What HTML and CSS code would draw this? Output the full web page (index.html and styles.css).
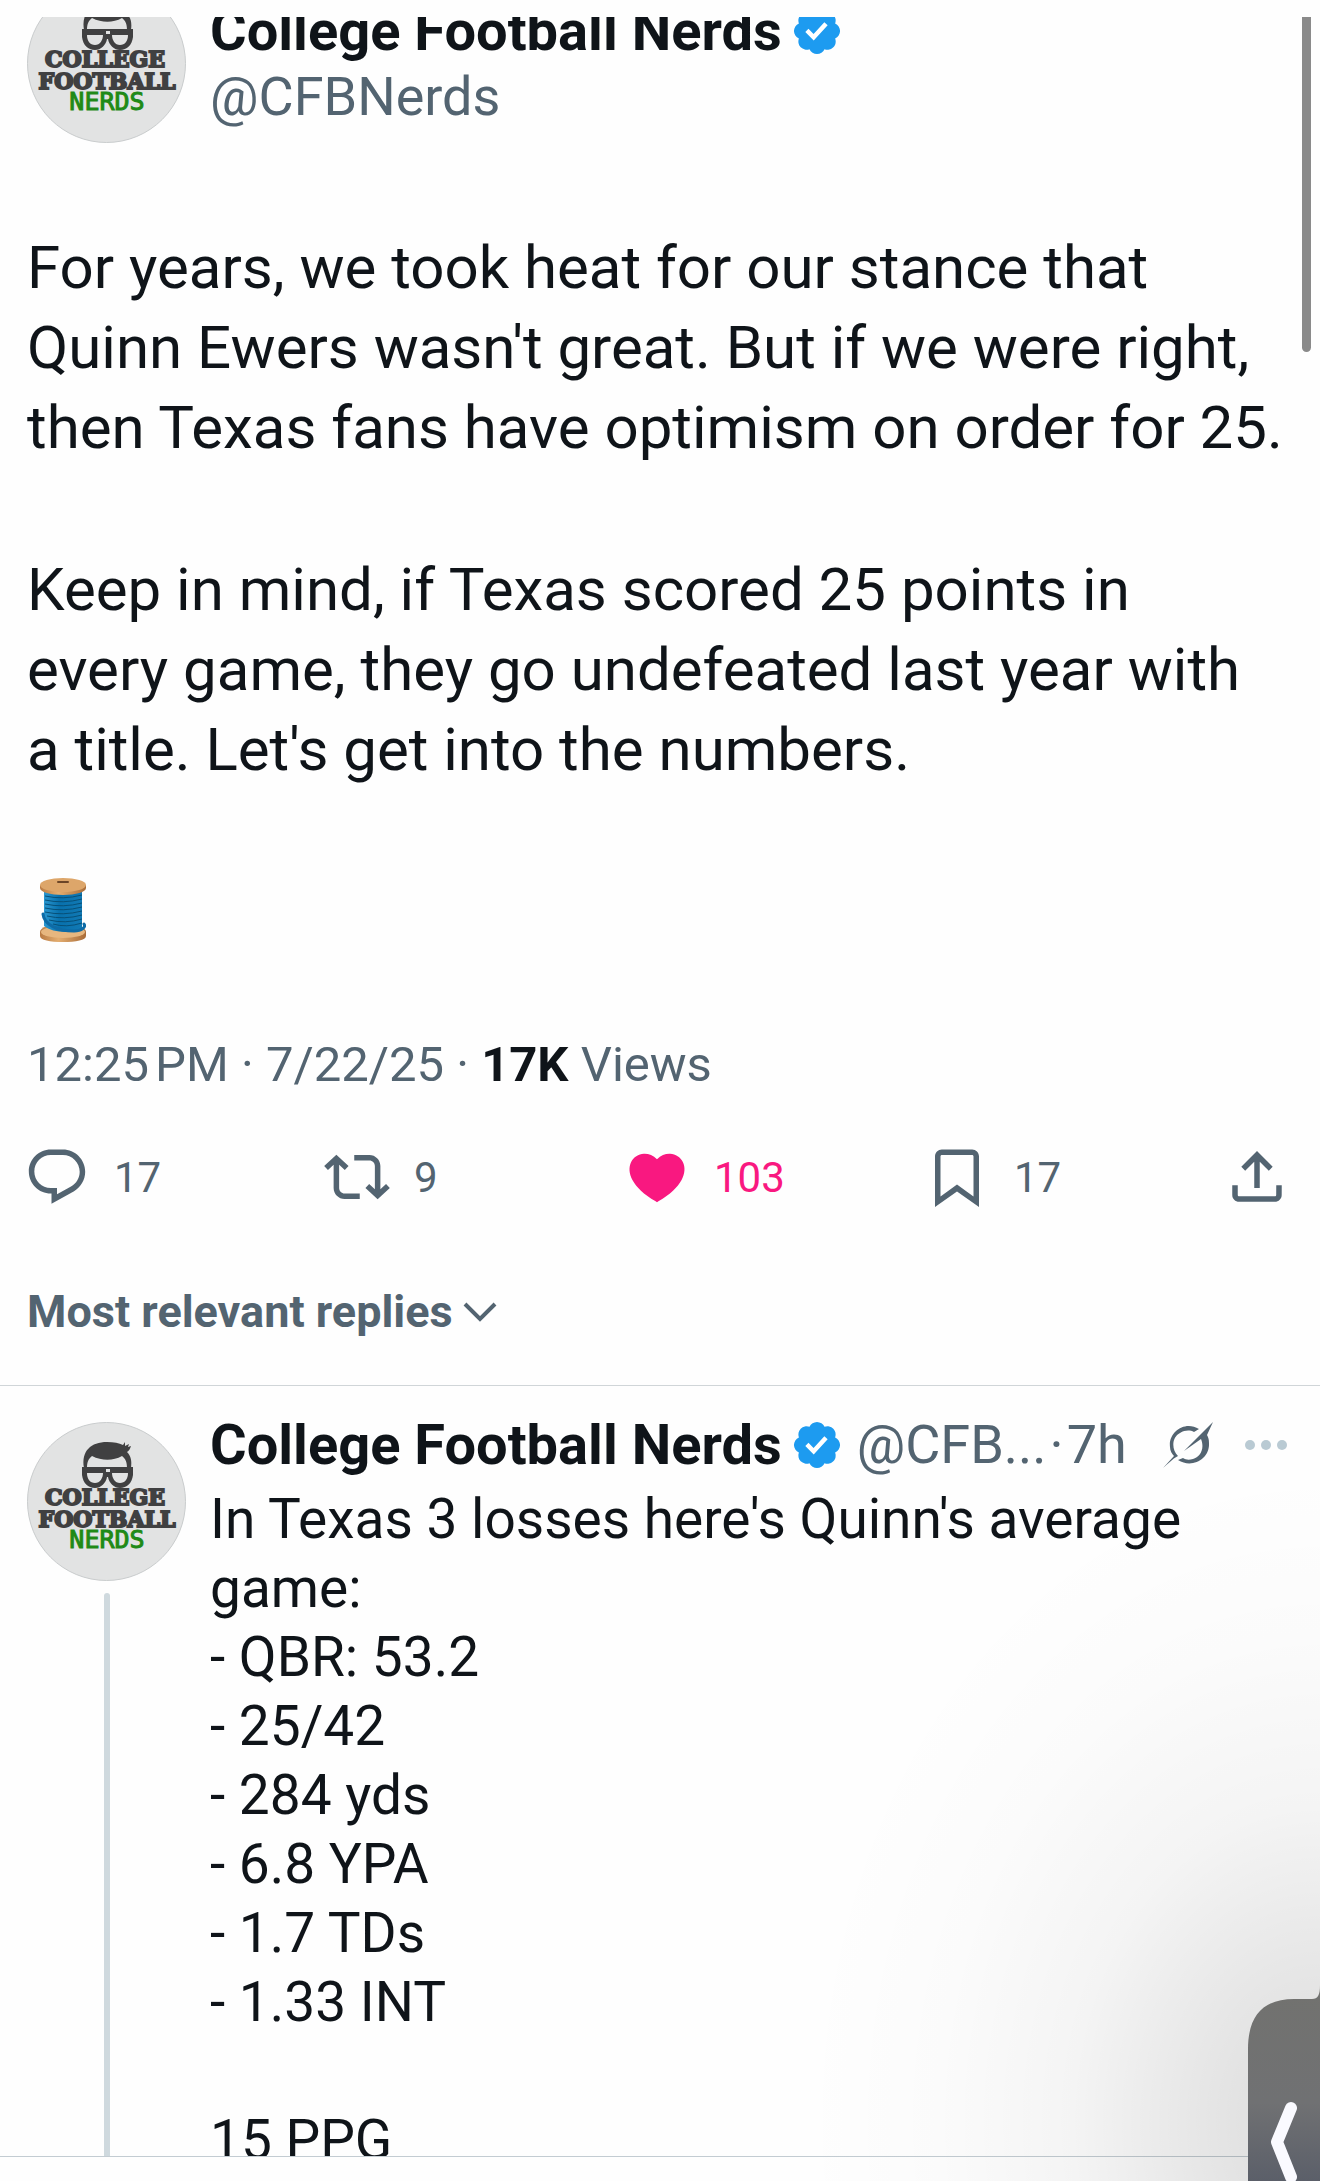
FILE: index.html
```html
<!DOCTYPE html>
<html lang="en">
<head>
    <meta charset="UTF-8">
    <meta name="viewport" content="width=device-width, initial-scale=1.0">
    <title>College Football Nerds - Post</title>
    <link rel="stylesheet" href="styles.css">
</head>
<body>
    <!-- Shared artwork -->
    <svg class="sprite" aria-hidden="true">
        <symbol id="logo" viewBox="0 0 159 159">
            <circle cx="79.5" cy="79.5" r="79" fill="#e2e3e3" stroke="#c9cccd"/>
            <path fill="#404041" d="M57 46C54 29 64 20 80 20c7 0 12 1 16 3l2-3v4l4-2-1 3 3-1c-1 3-2 5-4 6 4 4 5 9 4 16h-4c0-5-1-9-5-12-9 5-20 5-30 0-4 3-5 7-5 12z"/>
            <path fill="#404041" fill-rule="evenodd" d="M55 45h51v8c-1 8-6 13-13 13-6 0-11-5-12-11h-1c-1 6-6 11-12 11-7 0-12-5-13-13zm5 6c0 6 3 10 8 10s8-5 8-10zm25 0c0 5 3 10 8 10s8-4 8-10zm-6-4v3h4v-3z"/>
            <g class="logo-slab">
                <text x="78" y="83">COLLEGE</text>
                <text x="80" y="105">FOOTBALL</text>
            </g>
            <text class="logo-digital" x="80" y="126">NERDS</text>
        </symbol>
        <symbol id="verified" viewBox="0 0 22 22">
            <path fill="#1d9bf0" d="M20.396 11c-.018-.646-.215-1.275-.57-1.816-.354-.54-.852-.972-1.438-1.246.223-.607.27-1.264.14-1.897-.131-.634-.437-1.218-.882-1.687-.47-.445-1.053-.75-1.687-.882-.633-.13-1.29-.083-1.897.14-.273-.587-.704-1.086-1.245-1.44S11.647 1.62 11 1.604c-.646.017-1.273.213-1.813.568s-.969.854-1.24 1.44c-.608-.223-1.267-.272-1.902-.14-.635.13-1.22.436-1.69.882-.445.47-.749 1.055-.878 1.688-.13.633-.08 1.29.144 1.896-.587.274-1.087.705-1.443 1.245-.356.54-.555 1.17-.574 1.817.02.647.218 1.276.574 1.817.356.54.856.972 1.443 1.245-.224.606-.274 1.263-.144 1.896.13.634.433 1.218.877 1.688.47.443 1.054.747 1.687.878.633.132 1.29.084 1.897-.136.274.586.705 1.084 1.246 1.439.54.354 1.17.551 1.816.569.647-.016 1.276-.213 1.817-.567s.972-.854 1.245-1.44c.604.239 1.266.296 1.903.164.636-.132 1.22-.447 1.68-.907.46-.46.776-1.044.908-1.681s.075-1.299-.165-1.903c.586-.274 1.084-.705 1.439-1.246.354-.54.551-1.17.569-1.816z"/>
            <path fill="#fff" d="M9.662 14.85l-3.429-3.428 1.293-1.302 2.072 2.072 4.4-4.794 1.347 1.246z"/>
        </symbol>
    </svg>

    <main class="screen">
        <article class="post">
            <header class="post-header">
                <a href="#profile" class="avatar" aria-label="College Football Nerds"><svg><use href="#logo"/></svg></a>
                <div class="author">
                    <a href="#profile" class="name">College Football Nerds <svg class="badge"><use href="#verified"/></svg></a>
                    <a href="#profile" class="handle">@CFBNerds</a>
                </div>
            </header>

            <div class="post-text">
                <p>For years, we took heat for our stance that Quinn Ewers wasn't great. But if we were right, then Texas fans have optimism on order for 25.</p>
                <p>Keep in mind, if Texas scored 25 points in<br> every game, they go undefeated last year with<br> a title. Let's get into the numbers.</p>
            </div>

            <svg class="thread-emoji" viewBox="0 0 46 64" role="img" aria-label="thread">
                <defs>
                    <linearGradient id="wood" x2="1">
                        <stop offset="0" stop-color="#b97b43"/>
                        <stop offset=".4" stop-color="#e3ad70"/>
                        <stop offset="1" stop-color="#a96c38"/>
                    </linearGradient>
                    <linearGradient id="yarn" x2="1">
                        <stop offset="0" stop-color="#2a97d0"/>
                        <stop offset=".4" stop-color="#0871ad"/>
                        <stop offset="1" stop-color="#1179b4"/>
                    </linearGradient>
                </defs>
                <path fill="url(#wood)" d="M0 54c0-5 10-8 23-8s23 3 23 8v4c0 4-10 6-23 6S0 62 0 58z"/>
                <ellipse cx="23" cy="54" rx="22" ry="6" fill="#e7b77f"/>
                <path fill="url(#yarn)" d="M4 11h38v39c-8 6-30 5-38-2z"/>
                <path fill="none" stroke="#075078" d="M5 18q18 4 37-1M5 22q18 4 37-1M5 26q18 4 37-1M5 30q18 4 37-1M5 34q18 4 37-1M7 38q17 4 35-1M9 42q16 4 33-1M13 46q13 4 29-1"/>
                <path fill="none" stroke="#0e6ba6" stroke-width="3" stroke-linecap="round" d="M3 36c1 11 15 17 31 17 8 0 12-4 10-7"/>
                <path fill="url(#wood)" d="M0 7h46v3c0 4-10 7-23 7S0 14 0 10z"/>
                <ellipse cx="23" cy="7" rx="23" ry="7" fill="#dda66a"/>
                <rect x="17" y="3" width="12" height="2" rx="1" fill="#6b4527"/>
            </svg>

            <p class="meta">12:25&#8239;PM · 7/22/25 · <strong>17K</strong> Views</p>

            <div class="actions">
                <button type="button" class="action" aria-label="17 replies">
                    <svg viewBox="0 0 24 24"><path d="M1.751 10c0-4.42 3.584-8 8.005-8h4.366c4.49 0 8.129 3.64 8.129 8.13 0 2.96-1.607 5.68-4.196 7.11l-8.054 4.46v-3.69h-.067c-4.49.1-8.183-3.51-8.183-8.01zm8.005-6c-3.317 0-6.005 2.69-6.005 6 0 3.37 2.77 6.08 6.138 6.01l.351-.01h1.761v2.3l5.087-2.81c1.951-1.08 3.163-3.13 3.163-5.36 0-3.39-2.744-6.13-6.129-6.13H9.756z"/></svg>
                    17
                </button>
                <button type="button" class="action" aria-label="9 reposts">
                    <svg viewBox="0 0 24 24"><path d="M4.5 3.88l4.432 4.14-1.364 1.46L5.5 7.55V16c0 1.1.896 2 2 2H13v2H7.5c-2.209 0-4-1.79-4-4V7.55L1.432 9.48.068 8.02 4.5 3.88zM16.5 6H11V4h5.5c2.209 0 4 1.79 4 4v8.45l2.068-1.93 1.364 1.46-4.432 4.14-4.432-4.14 1.364-1.46 2.068 1.93V8c0-1.1-.896-2-2-2z"/></svg>
                    9
                </button>
                <button type="button" class="action liked" aria-label="103 likes">
                    <svg viewBox="0 0 24 24"><path d="M20.884 13.19c-1.351 2.48-4.001 5.12-8.379 7.67l-.503.3-.504-.3c-4.379-2.55-7.029-5.19-8.382-7.67-1.36-2.5-1.41-4.86-.514-6.67.887-1.79 2.647-2.91 4.601-3.01 1.651-.09 3.368.56 4.798 2.01 1.429-1.45 3.146-2.1 4.796-2.01 1.954.1 3.714 1.22 4.601 3.01.896 1.81.846 4.17-.514 6.67z"/></svg>
                    103
                </button>
                <button type="button" class="action" aria-label="17 bookmarks">
                    <svg viewBox="0 0 24 24"><path d="M4 4.5C4 3.12 5.119 2 6.5 2h11C18.881 2 20 3.12 20 4.5v18.44l-8-5.71-8 5.71V4.5zM6.5 4c-.276 0-.5.22-.5.5v14.56l6-4.29 6 4.29V4.5c0-.28-.224-.5-.5-.5h-11z"/></svg>
                    17
                </button>
                <button type="button" class="action" aria-label="Share">
                    <svg viewBox="0 0 24 24"><path d="M12 2.59l5.7 5.7-1.41 1.42L13 6.41V16h-2V6.41l-3.3 3.3-1.41-1.42L12 2.59zM21 15l-.02 3.51c0 1.38-1.12 2.49-2.5 2.49H5.5C4.11 21 3 19.88 3 18.5V15h2v3.5c0 .28.22.5.5.5h12.98c.28 0 .5-.22.5-.5L19 15h2z"/></svg>
                </button>
            </div>

            <button type="button" class="sort">
                Most relevant replies
                <svg viewBox="0 0 34 20"><path d="M2 2l15 15L32 2"/></svg>
            </button>
        </article>

        <article class="reply">
            <div class="rail">
                <a href="#profile" class="avatar" aria-label="College Football Nerds"><svg><use href="#logo"/></svg></a>
                <div class="thread-line"></div>
            </div>
            <div class="reply-body">
                <header class="reply-header">
                    <a href="#profile" class="name">College Football Nerds <svg class="badge"><use href="#verified"/></svg></a>
                    <span class="handle byline"><span>@CFB...</span><span>·</span><span>7h</span></span>
                    <button type="button" class="icon-button grok" aria-label="Explain this post">
                        <svg viewBox="0 0 50 46">
                            <path d="M36 7C22-2 5 10 7 25c0 4 2 7 4 9L0 46c5-4 9-9 15-12C8 27 9 15 17 11c5-3 10-3 14-1z"/>
                            <path d="M15 38c14 9 32-1 31-17 0-4-1-6-2-8L50 0 21 29l17-12c4 10-1 18-8 20-4 1-7 1-10-1z"/>
                        </svg>
                    </button>
                    <button type="button" class="icon-button more" aria-label="More">
                        <svg viewBox="0 0 42 10"><circle cx="5" cy="5" r="5"/><circle cx="21" cy="5" r="5"/><circle cx="37" cy="5" r="5"/></svg>
                    </button>
                </header>
                <p class="reply-text">In Texas 3 losses here's Quinn's average game:<br>
                    - QBR: 53.2<br>
                    - 25/42<br>
                    - 284 yds<br>
                    - 6.8 YPA<br>
                    - 1.7 TDs<br>
                    - 1.33 INT<br>
                    <br>
                    15 PPG</p>
            </div>
        </article>
    </main>

    <!-- Overlays -->
    <div class="shade"></div>
    <div class="scroll-thumb"></div>
    <button type="button" class="side-tab" aria-label="Show video">
        <svg viewBox="0 0 72 196">
            <defs>
                <linearGradient id="tab" x2="0" y2="1">
                    <stop offset="0" stop-color="#72726f"/>
                    <stop offset=".6" stop-color="#707173"/>
                    <stop offset="1" stop-color="#5b5f69"/>
                </linearGradient>
            </defs>
            <path fill="url(#tab)" d="M72 0c0 10-2 14-8 14H46C16 14 0 30 0 64v132h72z"/>
            <path fill="none" stroke="#fafaff" stroke-width="12" stroke-linecap="round" stroke-linejoin="round" d="M43 123L29 157l14 35"/>
        </svg>
    </button>
</body>
</html>
```
FILE: styles.css
```css
* {
    margin: 0;
    padding: 0;
    box-sizing: border-box;
}
html, body {
    height: 100%;
    overflow: hidden;
}
body {
    position: relative;
    display: flex;
    flex-direction: column;
    padding: 17px 0 24px;
    background-color: #fefefe;
    color: #0f1419;
    font-family: Roboto, "Liberation Sans", sans-serif;
}
a {
    color: inherit;
    text-decoration: none;
}
button {
    border: none;
    background: none;
    color: #536471;
    font-family: inherit;
    cursor: pointer;
}
svg {
    display: block;
    flex: none;
    fill: currentColor;
}
.sprite {
    position: absolute;
    width: 0;
    height: 0;
}
.screen {
    flex: 1;
    min-height: 0;
    display: flex;
    flex-direction: column;
    overflow: hidden;
    border-bottom: 1px solid #c3ccd2;
}

/* Avatar and author */
.avatar, .avatar svg {
    display: block;
    flex: none;
    width: 159px;
    height: 159px;
}
.logo-slab {
    font: bold 22px "DejaVu Serif", serif;
    fill: #404041;
    stroke: #404041;
    stroke-width: 2px;
    text-anchor: middle;
}
.logo-digital {
    font: 25px "DejaVu Sans Mono", monospace;
    fill: #1f8a17;
    stroke: #1f8a17;
    stroke-width: 1px;
    text-anchor: middle;
}
.name {
    display: flex;
    align-items: center;
    gap: 8px;
    font-size: 56px;
    font-weight: bold;
    white-space: nowrap;
}
.badge {
    width: 54px;
    height: 54px;
}
.handle {
    color: #536471;
    font-size: 54px;
    white-space: nowrap;
}
.byline {
    display: flex;
    gap: 3px;
}

/* Main post, already scrolled a little under the top edge */
.post {
    flex: none;
    margin-top: -33px;
    padding: 0 28px 48px 27px;
    border-bottom: 1px solid #d0d5d8;
}
.post-header {
    display: flex;
    align-items: center;
    gap: 24px;
}
.author {
    display: flex;
    flex-direction: column;
    line-height: 66px;
}
.post-text {
    display: flex;
    flex-direction: column;
    gap: 82px;
    margin-top: 85px;
    font-size: 60px;
    line-height: 80px;
}
.thread-emoji {
    width: 46px;
    height: 64px;
    margin: 88px 0 0 13px;
}
.meta {
    margin-top: 93px;
    color: #536471;
    font-size: 49px;
    line-height: 60px;
}
.meta strong {
    color: #0f1419;
}
.actions {
    display: grid;
    grid-template-columns: repeat(4, 1fr) auto;
    margin: 49px 2px 0 -3px;
}
.action {
    display: flex;
    align-items: center;
    gap: 24px;
    font-size: 42px;
}
.action svg {
    width: 66px;
    height: 66px;
}
.liked {
    color: #f91880;
}
.sort {
    display: flex;
    align-items: center;
    gap: 10px;
    margin-top: 77px;
    font-size: 45px;
    font-weight: bold;
    line-height: 50px;
}
.sort svg {
    width: 34px;
    height: 20px;
    fill: none;
    stroke: currentColor;
    stroke-width: 4px;
}

/* Reply */
.reply {
    flex: 1;
    min-height: 0;
    display: flex;
    gap: 24px;
    padding: 36px 28px 0 27px;
}
.rail {
    display: flex;
    flex-direction: column;
    align-items: center;
    gap: 12px;
}
.thread-line {
    flex: 1;
    width: 6px;
    border-radius: 3px 3px 0 0;
    background-color: #cfd9de;
}
.reply-body {
    flex: 1;
    min-width: 0;
}
.reply-header {
    display: flex;
    align-items: center;
    gap: 13px;
    height: 46px;
    line-height: 46px;
}
.reply-text {
    margin-top: 17px;
    font-size: 55px;
    line-height: 69px;
}
.grok {
    margin-left: auto;
}
.grok svg {
    width: 50px;
    height: 46px;
}
.more {
    margin: 0 5px 0 19px;
    color: #b9cad3;
}
.more svg {
    width: 42px;
    height: 10px;
}

/* Overlays */
.shade {
    position: absolute;
    right: 0;
    bottom: 0;
    width: 600px;
    height: 750px;
    background: radial-gradient(ellipse 520px 660px at 100% 92%, rgba(0, 0, 0, 0.14), rgba(0, 0, 0, 0.09) 25%, rgba(0, 0, 0, 0.04) 48%, rgba(0, 0, 0, 0.01) 74%, transparent);
    pointer-events: none;
}
.scroll-thumb {
    position: absolute;
    top: 17px;
    right: 9px;
    width: 9px;
    height: 335px;
    border-radius: 0 0 5px 5px;
    background-color: #8a8a8a;
}
.side-tab {
    position: absolute;
    right: 0;
    bottom: 0;
}
.side-tab svg {
    width: 72px;
    height: 196px;
}
```
